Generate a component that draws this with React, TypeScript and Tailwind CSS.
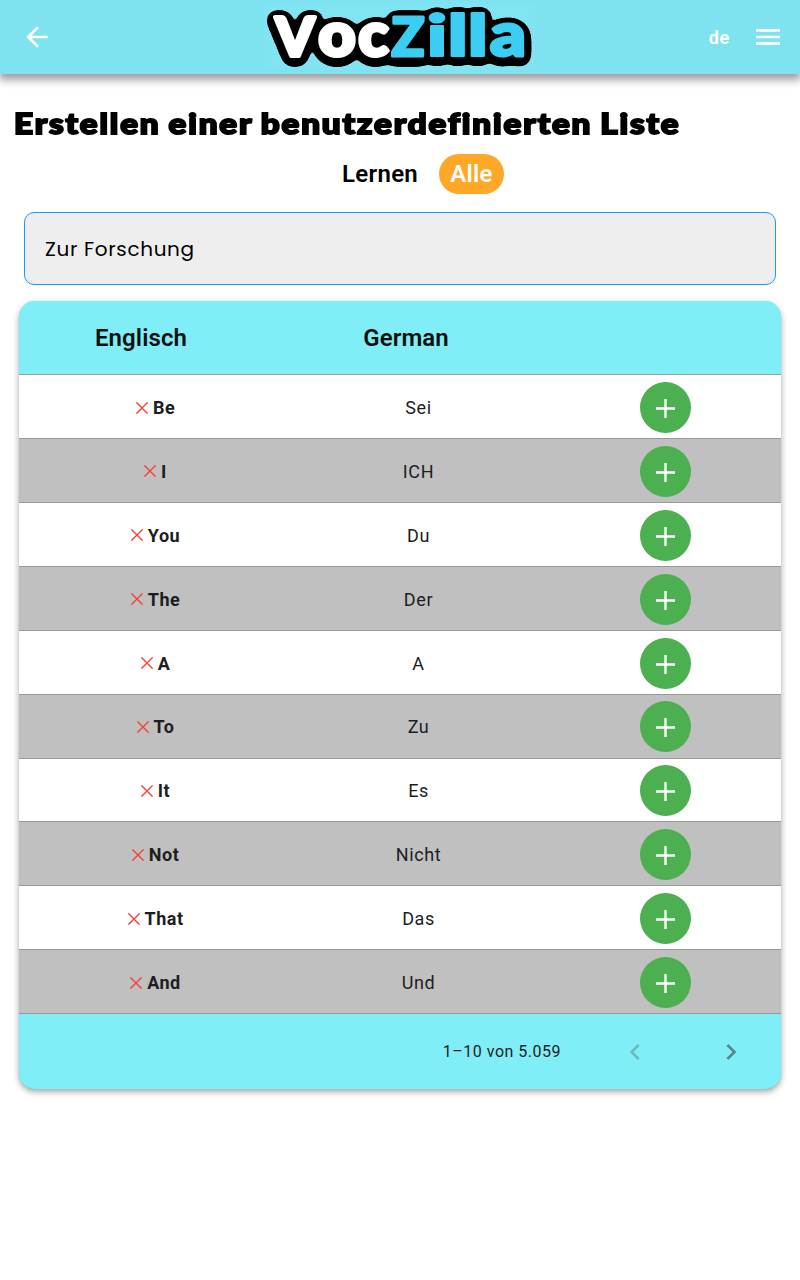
const rows = [
  ['Be', 'Sei'],
  ['I', 'ICH'],
  ['You', 'Du'],
  ['The', 'Der'],
  ['A', 'A'],
  ['To', 'Zu'],
  ['It', 'Es'],
  ['Not', 'Nicht'],
  ['That', 'Das'],
  ['And', 'Und'],
];

// Per-letter placement keeps the wordmark's uneven, chunky rhythm.
const letters = [
  { c: 'V', x: 15.5, w: 39, size: 54, bold: 4, color: '#fff' },
  { c: 'o', x: 58.5, w: 37, size: 60, bold: 4, color: '#fff' },
  { c: 'c', x: 98.5, w: 30, size: 60, bold: 4, color: '#fff' },
  { c: 'Z', x: 131.5, w: 33, size: 54, bold: 3, color: '#3ccdf2' },
  { c: 'i', x: 166.5, w: 21, size: 57, bold: 2, color: '#3ccdf2' },
  { c: 'l', x: 187.3, w: 21, size: 57, bold: 2, color: '#3ccdf2' },
  { c: 'l', x: 207.3, w: 21, size: 57, bold: 2, color: '#3ccdf2' },
  { c: 'a', x: 230, w: 36, size: 60, bold: 3, color: '#3ccdf2' },
];

function Logo() {
  return (
    <svg width="280" height="74" viewBox="0 0 280 74" className="overflow-visible font-['Lato',sans-serif] font-black" aria-label="VocZilla">
      <defs>
        <filter id="outline" filterUnits="userSpaceOnUse" x="-10" y="-10" width="300" height="94" colorInterpolationFilters="sRGB">
          <feGaussianBlur in="SourceAlpha" stdDeviation="4" />
          <feComponentTransfer>
            <feFuncA type="linear" slope="60" intercept="-1.9" />
          </feComponentTransfer>
          <feOffset dy="2" result="shape" />
          <feMerge>
            <feMergeNode in="shape" />
            <feMergeNode in="SourceGraphic" />
          </feMerge>
        </filter>
      </defs>
      <rect x="5" y="4" width="270" height="66" fill="#80e4f2" />
      <g filter="url(#outline)" strokeLinejoin="round">
        {letters.map((l, i) => (
          <text
            key={i}
            x={l.x}
            y={56}
            fontSize={l.size}
            textLength={l.w}
            lengthAdjust="spacingAndGlyphs"
            fill={l.color}
            stroke={l.color}
            strokeWidth={l.bold}
          >
            {l.c}
          </text>
        ))}
      </g>
    </svg>
  );
}

function Header() {
  return (
    <header className="grid h-[74px] grid-cols-[1fr_280px_1fr] items-center bg-[#7ee2f0] shadow-[0_5px_8px_1px_rgba(0,0,0,0.38)]">
      <svg width="32" height="32" viewBox="0 0 24 24" fill="#fff" className="ml-[21px]">
        <path d="M20 11H7.83l5.59-5.59L12 4l-8 8 8 8 1.41-1.41L7.83 13H20v-2z" />
      </svg>
      <Logo />
      <div className="flex items-center justify-end pr-5">
        <span className="mr-[26px] text-[18px] font-bold tracking-[0.7px] text-white">de</span>
        <svg width="24" height="16" viewBox="0 0 24 16" fill="#fff">
          <path d="M0 0h24v2.7H0zM0 6.7h24v2.6H0zM0 13.3h24V16H0z" />
        </svg>
      </div>
    </header>
  );
}

function Title() {
  return (
    <h1 className="ml-[14px] h-[36px] w-[600px] origin-left scale-x-[1.185] whitespace-nowrap font-['Lato',sans-serif] text-[28px] leading-[36px] font-black tracking-[1.6px] text-black [word-spacing:-1.6px] [-webkit-text-stroke:1.9px_black]">
      Erstellen einer benutzerdefinierten Liste
    </h1>
  );
}

function Table() {
  const cols = 'grid grid-cols-[244px_310px_184px_24px] items-center justify-items-center';
  return (
    <section className="mx-[19px] mt-4 h-[788px] overflow-hidden rounded-[16px] bg-[#80eef6] text-[#1d1d1f] shadow-[0_3px_6px_rgba(0,0,0,0.35),0_0_1px_#80eef6]">
      <div className={`${cols} h-[74.2px] border-b border-[#9e9e9e] text-[24px] font-semibold tracking-[0.1px] text-[#111]`}>
        <span>Englisch</span>
        <span className="mr-6">German</span>
      </div>
      {rows.map(([en, de], i) => (
        <div key={en} className={`${cols} h-[63.9px] border-b border-[#999] pt-[1.8px] ${i % 2 ? 'bg-[#c0c0c0]' : 'bg-white'}`}>
          <span className="ml-[29px] flex items-center gap-[5px] text-[18px] font-bold tracking-[0.5px]">
            <svg width="12" height="12" viewBox="0 0 12 12" stroke="#f44336" strokeWidth="1.4">
              <path d="M.4.4l11.2 11.2M11.6.4.4 11.6" />
            </svg>
            {en}
          </span>
          <span className="ml-px text-[18px] tracking-[0.6px]">{de}</span>
          <button className="flex h-[51px] w-[51px] items-center justify-center rounded-full bg-[#4caf50] pt-[2px]" aria-label="+">
            <svg width="19" height="19" viewBox="0 0 19 19" stroke="#fff" strokeWidth="2.4">
              <path d="M9.5 0v19M0 9.5h19" />
            </svg>
          </button>
        </div>
      ))}
      <div className="flex h-[75px] items-center pr-[34px]">
        <span className="ml-auto text-[16px] tracking-[0.5px]">1–10 von 5.059</span>
        <svg width="32" height="32" viewBox="0 0 24 24" fill="#6cbabe" className="ml-[58px]">
          <path d="M15.41 7.41 14 6l-6 6 6 6 1.41-1.41L10.83 12z" />
        </svg>
        <svg width="32" height="32" viewBox="0 0 24 24" fill="#56868a" className="ml-[64px]">
          <path d="M8.59 7.41 10 6l6 6-6 6-1.41-1.41L13.17 12z" />
        </svg>
      </div>
    </section>
  );
}

export default function App() {
  return (
    <div className="h-[1280px] w-[800px] overflow-hidden bg-white font-['Roboto',sans-serif]">
      <Header />
      <main className="pt-[31px]">
        <Title />
        <div className="mt-[13px] flex h-10 items-center pl-[342px] text-[24px] font-semibold tracking-[0.3px] text-black">
          <span className="w-[97px]">Lernen</span>
          <span className="flex h-10 w-[65px] items-center justify-center rounded-[20px] bg-[#ffa726] text-white">Alle</span>
        </div>
        <div className="mx-6 mt-[18px] flex h-[73px] items-center rounded-[10px] border-[1.4px] border-[#2196f3] bg-[#eee] pt-px pl-5 font-['Poppins','Open_Sans',sans-serif] text-[20px] tracking-[0.65px] text-black">
          Zur Forschung
        </div>
        <Table />
      </main>
    </div>
  );
}
